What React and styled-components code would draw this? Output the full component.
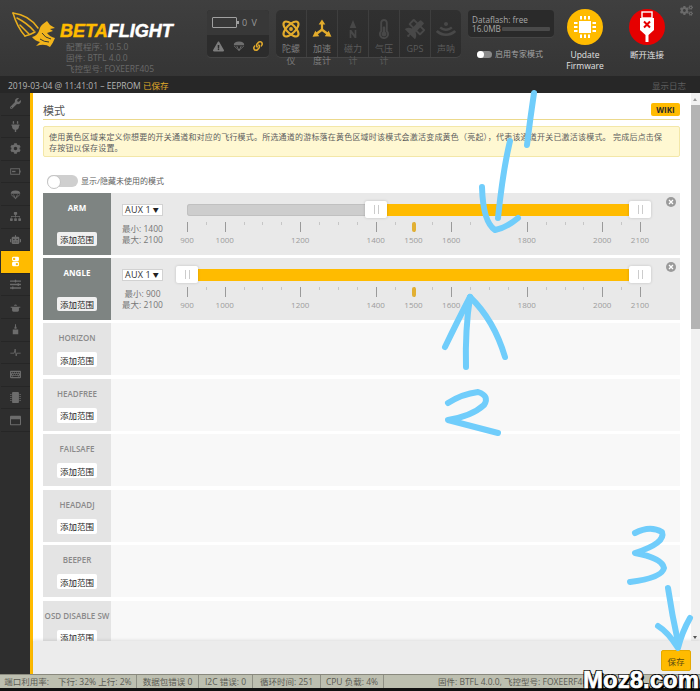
import React from "react"
import styled, { createGlobalStyle } from "styled-components"
import {
  FaWrench,
  FaPlug,
  FaCog,
  FaCogs,
  FaSitemap,
  FaRobot,
  FaSlidersH,
  FaThermometerHalf,
  FaSatellite,
  FaWifi,
  FaLink,
  FaExclamationTriangle,
  FaMicrochip,
  FaKeyboard,
  FaRegWindowMaximize,
} from "react-icons/fa"
import { LuAtom } from "react-icons/lu"

const sans = `"Open Sans", "Noto Sans CJK SC", sans-serif`
const yellow = "#ffbb00"

const GlobalStyle = createGlobalStyle`
  html, body {
    margin: 0;
    padding: 0;
    background: #111;
  }
  * {
    box-sizing: border-box;
  }
`

const Shell = styled.div`
  position: relative;
  width: 700px;
  height: 691px;
  display: flex;
  flex-direction: column;
  overflow: hidden;
  font-family: ${sans};
`

const Header = styled.header`
  position: relative;
  height: 76px;
  flex: none;
  display: flex;
  background: linear-gradient(#3f3f3f, #353535);
`

const LogoBlock = styled.div`
  width: 207px;
  flex: none;
  padding: 12px 0 0 12px;
  position: relative;
`

const LogoRow = styled.div`
  display: flex;
  align-items: flex-start;
  height: 29px;
`

const Wordmark = styled.div`
  margin: 9px 0 0 4px;
  font-family: "Liberation Sans", sans-serif;
  font-size: 18px;
  line-height: 20px;
  font-weight: 700;
  font-style: italic;
  color: #fff;
  -webkit-text-stroke: 0.5px currentColor;
  & span {
    color: ${yellow};
  }
`

const InfoLines = styled.div`
  margin-left: 54px;
  font-size: 8.5px;
  line-height: 11px;
  color: #696969;
  white-space: nowrap;
`

const BatteryPanel = styled.div`
  width: 62px;
  height: 47px;
  margin-top: 10px;
  flex: none;
  border-radius: 4px;
  overflow: hidden;
  background: #2c2c2c;
  box-shadow: 0 1px 0 #454545;
`

const BatteryTop = styled.div`
  height: 25px;
  padding-left: 5px;
  display: flex;
  align-items: center;
  gap: 5px;
  background: #383838;
  color: #999;
  font-size: 9px;
  letter-spacing: 1px;
`

const BatteryShape = styled.div`
  position: relative;
  width: 25px;
  height: 11px;
  border: 1px solid #a0a0a0;
  border-radius: 1px;
  &::after {
    content: "";
    position: absolute;
    right: -3px;
    top: 3px;
    width: 2px;
    height: 3px;
    background: #a0a0a0;
  }
`

const BatteryIcons = styled.div`
  height: 22px;
  padding: 0 6px;
  display: flex;
  align-items: center;
  justify-content: space-between;
`

const SensorPanel = styled.div`
  width: 185px;
  height: 47px;
  margin: 10px 0 0 7px;
  flex: none;
  display: flex;
  border-radius: 5px;
  background: linear-gradient(#303030, #2c2c2c);
  box-shadow: 0 1px 0 #454545;
`

const Sensor = styled.div`
  flex: 1;
  padding: 9px 3px 0;
  display: flex;
  flex-direction: column;
  align-items: center;
  border-left: ${props => (props.$first ? "0" : "1px solid #3e3e3e")};
  color: ${props => (props.$on ? "#e3ac2c" : "#484848")};
  & svg {
    flex: none;
  }
`

const SensorLabel = styled.div`
  width: 20px;
  margin-top: 4px;
  font-size: 9px;
  line-height: 12px;
  text-align: center;
  color: ${props => (props.$on ? "#7c7c7c" : "#5b5b5b")};
`

const FlashColumn = styled.div`
  width: 86px;
  margin: 10px 0 0 7px;
  flex: none;
`

const FlashPanel = styled.div`
  height: 27px;
  padding: 5px 4px 0;
  border-radius: 4px;
  background: #2a2a2a;
  box-shadow: 0 1px 0 #454545;
  font-size: 8.2px;
  line-height: 9px;
  color: #a8a8a8;
`

const FlashRow = styled.div`
  display: flex;
  align-items: center;
  gap: 1px;
`

const FlashBar = styled.div`
  flex: 1;
  height: 4px;
  border-radius: 1px;
  background: #4a4a4a;
`

const ExpertRow = styled.div`
  margin: 13px 0 0 9px;
  display: flex;
  align-items: center;
  gap: 3px;
  font-size: 8px;
  line-height: 8px;
  color: #a5a5a5;
  white-space: nowrap;
`

const MiniToggle = styled.div`
  position: relative;
  width: 15px;
  height: 7px;
  border-radius: 4px;
  background: #8a8a8a;
  &::before {
    content: "";
    position: absolute;
    left: 0;
    top: 0;
    width: 7px;
    height: 7px;
    border-radius: 50%;
    background: #fff;
  }
`

const HeaderAction = styled.div`
  width: 62px;
  flex: none;
  padding-top: 9px;
  display: flex;
  flex-direction: column;
  align-items: center;
  font-size: 8.5px;
  line-height: 10.5px;
  color: #e2e2e2;
  text-align: center;
`

const ActionDisc = styled.div`
  width: 36px;
  height: 36px;
  margin-bottom: 5px;
  border-radius: 50%;
  display: flex;
  align-items: center;
  justify-content: center;
  background: ${props => props.$color};
  color: #fff;
`

const GearButton = styled.div`
  position: absolute;
  top: 4px;
  right: 7px;
  color: #6a6a6a;
  line-height: 0;
`

const LogBar = styled.div`
  height: 17px;
  flex: none;
  padding: 0 14px 0 8px;
  display: flex;
  align-items: center;
  justify-content: space-between;
  background: #272727;
  font-size: 8.5px;
  color: #b5b5b5;
  & b {
    font-weight: 400;
    color: #e0aa2a;
  }
  & i {
    font-style: normal;
    color: #5e5e5e;
  }
`

const Main = styled.div`
  flex: 1;
  min-height: 0;
  display: flex;
`

const Sidebar = styled.nav`
  width: 33px;
  flex: none;
  padding-left: 1px;
  background: #2e2e2e;
  border-right: 3px solid ${yellow};
`

const NavItem = styled.div`
  height: 22.6px;
  display: flex;
  align-items: center;
  justify-content: center;
  border-bottom: 1px solid #262626;
  background: ${props => (props.$active ? yellow : "transparent")};
  color: ${props => (props.$active ? "#fff" : "#6c6c6c")};
`

const TabColumn = styled.div`
  flex: 1;
  min-width: 0;
  display: flex;
  flex-direction: column;
`

const TabBody = styled.div`
  flex: 1;
  min-height: 0;
  display: flex;
  background: #fff;
`

const TabScroll = styled.div`
  flex: 1;
  min-width: 0;
  overflow: hidden;
  padding: 0 11px 0 10px;
`

const TitleRow = styled.div`
  height: 27px;
  padding-top: 10px;
  display: flex;
  align-items: center;
  justify-content: space-between;
  border-bottom: 1px solid #ecd98c;
`

const Title = styled.h2`
  margin: 0;
  font-size: 11px;
  line-height: 16px;
  font-weight: 400;
  color: #555;
`

const WikiBadge = styled.div`
  width: 29px;
  height: 13px;
  margin-top: -3px;
  border-radius: 2px;
  display: flex;
  align-items: center;
  justify-content: center;
  background: ${yellow};
  font-size: 8px;
  font-weight: 700;
  color: #2a2a2a;
`

const Note = styled.div`
  height: 31px;
  margin-top: 6px;
  padding: 4px 14px 0 5px;
  border: 1px solid #f3e7a8;
  border-radius: 2px;
  background: #fff8d2;
  font-size: 8px;
  line-height: 11px;
  letter-spacing: 0.2px;
  color: #5d5d5d;
`

const ShowUnused = styled.div`
  height: 13px;
  margin: 17px 0 6px 4px;
  display: flex;
  align-items: center;
  gap: 3px;
  font-size: 8px;
  color: #5d5d5d;
`

const LargeToggle = styled.div`
  position: relative;
  width: 31px;
  height: 12px;
  border-radius: 6px;
  background: #cfcfcf;
  &::before {
    content: "";
    position: absolute;
    left: 0;
    top: 0;
    width: 12px;
    height: 12px;
    border-radius: 50%;
    background: #fff;
    border: 1px solid #c4c4c4;
  }
`

const ModeList = styled.div`
  display: flex;
  flex-direction: column;
  gap: 3.5px;
`

const ModeRow = styled.div`
  position: relative;
  flex: none;
  height: ${props => (props.$active ? "61.5px" : "52px")};
  display: flex;
  background: ${props => (props.$active ? "#e9e9e9" : "#f8f8f8")};
`

const ModeHead = styled.div`
  width: 68px;
  flex: none;
  display: flex;
  flex-direction: column;
  align-items: center;
  background: ${props => (props.$active ? "#7e8482" : "#e4e4e4")};
`

const ModeName = styled.div`
  margin-top: 9px;
  font-size: 8px;
  line-height: 11px;
  font-weight: ${props => (props.$active ? 700 : 600)};
  color: ${props => (props.$active ? "#fff" : "#8a8a8a")};
  white-space: nowrap;
`

const AddRange = styled.div`
  width: 40px;
  height: ${props => (props.$active ? "14px" : "15px")};
  margin-top: ${props => (props.$active ? "19px" : "9px")};
  border-radius: 2px;
  display: flex;
  align-items: center;
  justify-content: center;
  background: ${props => (props.$active ? "#f0f0f0" : "#fff")};
  font-size: 8.5px;
  color: #222;
`

const RangeBody = styled.div`
  flex: 1;
  padding: 11px 0 0 11px;
  display: flex;
`

const ChannelColumn = styled.div`
  width: 41px;
  flex: none;
`

const ChannelSelect = styled.div`
  height: 12px;
  padding: 0 3px 1px 2px;
  display: flex;
  align-items: center;
  justify-content: space-between;
  background: #fff;
  border: 1px solid #d2d2d2;
  font-size: 9px;
  letter-spacing: 0.2px;
  color: #333;
  & span {
    font-size: 6px;
    color: #222;
  }
`

const MinMax = styled.div`
  margin-top: 7px;
  font-size: 8.5px;
  line-height: 11px;
  color: #777;
  text-align: center;
  white-space: nowrap;
`

const SliderColumn = styled.div`
  width: 453px;
  margin-left: 24px;
  flex: none;
`

const SliderTrack = styled.div`
  position: relative;
  height: 12px;
  border-radius: 3px;
  background: #cdcdcd;
  box-shadow: inset 0 0 0 1px #c0c0c0;
`

const SliderFill = styled.div`
  position: absolute;
  top: 0;
  bottom: 0;
  background: ${yellow};
`

const Handle = styled.div`
  position: absolute;
  top: -3px;
  width: 22px;
  height: 17px;
  margin-left: -11px;
  border-radius: 2px;
  background: #fff;
  box-shadow: 0 0 3px rgba(0, 0, 0, 0.18);
  &::before {
    content: "";
    position: absolute;
    left: 9px;
    top: 4px;
    width: 3px;
    height: 9px;
    border-left: 1px solid #ccc;
    border-right: 1px solid #ccc;
  }
`

const Scale = styled.div`
  position: relative;
  height: 29px;
  margin-top: 6px;
`

const Tick = styled.div`
  position: absolute;
  top: 0;
  width: 1px;
  height: ${props => (props.$major ? "10px" : "3px")};
  background: ${props => (props.$major ? "#9a9a9a" : "#c6c6c6")};
`

const TickLabel = styled.div`
  position: absolute;
  top: 13px;
  width: 30px;
  margin-left: -15px;
  text-align: center;
  font-size: 8px;
  line-height: 10px;
  color: #9c9c9c;
`

const Marker = styled.div`
  position: absolute;
  top: 0;
  width: 4px;
  height: 10px;
  margin-left: -1.5px;
  border-radius: 2px;
  background: #e2b033;
`

const RemoveButton = styled.div`
  position: absolute;
  top: 4px;
  right: 4px;
  width: 10px;
  height: 10px;
  border-radius: 50%;
  display: flex;
  align-items: center;
  justify-content: center;
  background: #9a9a9a;
  color: #fff;
`

const ScrollBar = styled.div`
  position: relative;
  width: 9px;
  flex: none;
  padding-top: 12px;
  background: #f1f1f1;
`

const ScrollThumb = styled.div`
  height: 224px;
  background: #b4b4b4;
`

const ScrollArrow = styled.div`
  position: absolute;
  left: 2px;
  width: 0;
  height: 0;
  border-left: 2.5px solid transparent;
  border-right: 2.5px solid transparent;
  ${props =>
    props.$down
      ? "bottom: 2px; border-top: 3px solid #555;"
      : "top: 5px; border-bottom: 3px solid #999;"}
`

const Toolbar = styled.div`
  position: relative;
  height: 33px;
  flex: none;
  padding: 9px 9px 0 0;
  display: flex;
  justify-content: flex-end;
  align-items: flex-start;
  background: #ececec;
  box-shadow: 0 -1px 3px rgba(0, 0, 0, 0.1);
`

const SaveButton = styled.div`
  width: 30px;
  height: 21px;
  border-radius: 2px;
  display: flex;
  align-items: center;
  justify-content: center;
  background: ${yellow};
  border: 1px solid #e5a900;
  font-size: 8.5px;
  color: #5a4a10;
`

const Footer = styled.footer`
  height: 17px;
  flex: none;
  border-bottom: 3px solid #111;
  border-top: 1px solid #8c8c80;
  display: flex;
  background: #bdbfb0;
  font-size: 8.5px;
  line-height: 13px;
  color: #5a5a52;
  white-space: nowrap;
`

const FooterItem = styled.div`
  width: ${props => props.$width}px;
  flex: none;
  text-align: center;
  border-right: 1px solid #8f9085;
`

const FirmwareInfo = styled.div`
  margin-left: 54px;
`

const Overlay = styled.svg`
  position: absolute;
  left: 0;
  top: 0;
  pointer-events: none;
`

const Watermark = styled.div`
  position: absolute;
  left: 583px;
  bottom: 0;
  font-family: "Liberation Sans", sans-serif;
  font-size: 24px;
  line-height: 22px;
  font-weight: 700;
  color: #fff;
  white-space: nowrap;
  -webkit-text-stroke: 0.6px #fff;
  text-shadow: 1px 1px 0 #000, -1px 1px 0 #000, 2px 2px 0 #000, 1px -1px 0 #000, -1px -1px 0 #000;
`

const Bird = () => (
  <svg width="44" height="36" viewBox="12 12 44 36">
    <g fill="none" stroke="#e9ae1d" strokeWidth="1.5" strokeLinecap="round">
      <path d="M13 13 Q29 15 38 28" />
      <path d="M13 13 Q17 27 25 36" />
      <path d="M25 36 Q30 35 35 32" />
      <path d="M17 18 Q27 23 34 31" />
      <path d="M20 25 Q25 30 29 34" />
    </g>
    <path
      d="M43 24 L47 21 L50 25 L55 28 L50 29 L53 31 L47 33 Q50 37 55 38 Q53 43 50 47 Q46 44 40 45 L36 46 L40 42 Q35 41 32 37 Q37 36 39 31 Q40 26 43 24Z"
      fill="#f2b41b"
    />
    <path d="M42 33 Q45 38 51 39 M40 39 Q44 42 49 42" stroke="#38382f" strokeWidth="1" fill="none" />
  </svg>
)

const Parachute = ({ size, color }) => (
  <svg width={size} height={size} viewBox="0 0 16 16">
    <path d="M1 7 Q1 2 8 2 Q15 2 15 7 L11 7 L8 7 L5 7Z" fill={color} />
    <path d="M1.5 8 L8 14 L14.5 8 M5 8 L8 14 L11 8" stroke={color} strokeWidth="1.2" fill="none" />
  </svg>
)

const BatteryGlyph = ({ size }) => (
  <svg width={size} height={size} viewBox="0 0 16 16">
    <rect x="1" y="4" width="13" height="8" fill="none" stroke="currentColor" strokeWidth="1.3" />
    <rect x="3" y="7" width="5" height="2" fill="currentColor" />
    <rect x="14" y="6.5" width="1.5" height="3" fill="currentColor" />
  </svg>
)

const SwitchGlyph = ({ size }) => (
  <svg width={size} height={size} viewBox="0 0 16 16">
    <rect x="3" y="1" width="10" height="6.5" rx="2" fill="currentColor" />
    <rect x="3" y="8.5" width="10" height="6.5" rx="2" fill="currentColor" />
    <circle cx="6" cy="4.2" r="1.7" fill="#ffbb00" />
    <circle cx="10" cy="11.8" r="1.7" fill="#ffbb00" />
  </svg>
)

const PotGlyph = ({ size }) => (
  <svg width={size} height={size} viewBox="0 0 16 16">
    <path d="M3 7 H13 V12 Q13 14 11 14 H5 Q3 14 3 12Z M1 7 H15 V8.5 H1Z M5.5 5.5 Q8 2 10.5 5.5 Z" fill="currentColor" />
  </svg>
)

const MotorGlyph = ({ size }) => (
  <svg width={size} height={size} viewBox="0 0 16 16">
    <path d="M4 8 H12 V15 H4Z M6.5 4 H9.5 V7 H6.5Z M7.3 0.5 H8.7 V4 H7.3Z" fill="currentColor" />
  </svg>
)

const PulseGlyph = ({ size }) => (
  <svg width={size} height={size} viewBox="0 0 16 16">
    <path d="M0.5 9 H6 L7.5 3 L9 13 L10 9 H15.5" stroke="currentColor" strokeWidth="1.2" fill="none" />
  </svg>
)

const ParachuteNav = ({ size }) => <Parachute size={size} color="currentColor" />

const AccelGlyph = () => (
  <svg width="20" height="20" viewBox="0 0 18 18" fill="currentColor">
    <path d="M9 0.5 L12 5 L10 5 L10 9 L14 12 L15 10.5 L17.5 16 L11.5 15.5 L12.7 13.8 L9 11 L5.3 13.8 L6.5 15.5 L0.5 16 L3 10.5 L4 12 L8 9 L8 5 L6 5Z" />
  </svg>
)

const MagGlyph = () => (
  <svg width="20" height="20" viewBox="0 0 18 18" fill="currentColor">
    <path d="M9 1 L12 8 H6Z M6 10 H7.5 L10.5 14 V10 H12 V17 H10.5 L7.5 13 V17 H6Z" />
  </svg>
)

const UsbGlyph = () => (
  <svg width="22" height="32" viewBox="0 0 22 32">
    <rect x="6" y="1" width="10" height="6" fill="none" stroke="#fff" strokeWidth="1.4" />
    <path d="M4 7 H18 V19 L12.5 24 V31 H9.5 V24 L4 19Z" fill="#fff" />
    <path d="M8 10.5 L14 16.5 M14 10.5 L8 16.5" stroke="#e60000" strokeWidth="2" />
  </svg>
)

const ChipGlyph = () => (
  <svg width="24" height="24" viewBox="0 0 24 24" fill="#fff">
    <rect x="6" y="6" width="12" height="12" />
    <path d="M1 7 H4.5 V9 H1Z M1 11 H4.5 V13 H1Z M1 15 H4.5 V17 H1Z M19.5 7 H23 V9 H19.5Z M19.5 11 H23 V13 H19.5Z M19.5 15 H23 V17 H19.5Z M7 1 H9 V4.5 H7Z M11 1 H13 V4.5 H11Z M15 1 H17 V4.5 H15Z M7 19.5 H9 V23 H7Z M11 19.5 H13 V23 H11Z M15 19.5 H17 V23 H15Z" />
  </svg>
)

const navIcons = [
  FaWrench,
  FaPlug,
  FaCog,
  BatteryGlyph,
  ParachuteNav,
  FaSitemap,
  FaRobot,
  SwitchGlyph,
  FaSlidersH,
  PotGlyph,
  MotorGlyph,
  PulseGlyph,
  FaKeyboard,
  FaMicrochip,
  FaRegWindowMaximize,
]

const sensors = [
  { icon: <LuAtom size={20} strokeWidth={2.6} />, label: "陀螺仪", on: true },
  { icon: <AccelGlyph />, label: "加速度计", on: true },
  { icon: <MagGlyph />, label: "磁力计" },
  { icon: <FaThermometerHalf size={20} />, label: "气压计" },
  { icon: <FaSatellite size={20} />, label: "GPS" },
  { icon: <FaWifi size={20} style={{ transform: "rotate(180deg)" }} />, label: "声呐" },
]

const modes = [
  { name: "ARM", min: 1400, max: 2100 },
  { name: "ANGLE", min: 900, max: 2100 },
  { name: "HORIZON" },
  { name: "HEADFREE" },
  { name: "FAILSAFE" },
  { name: "HEADADJ" },
  { name: "BEEPER" },
  { name: "OSD DISABLE SW" },
]

const majorTicks = [900, 1000, 1200, 1400, 1500, 1600, 1800, 2000, 2100]
const allTicks = Array.from({ length: 25 }, (_, i) => 900 + i * 50)
const pct = value => `${((value - 900) / 1200) * 100}%`

const RangeSlider = ({ min, max }) => (
  <SliderColumn>
    <SliderTrack>
      <SliderFill style={{ left: pct(min), width: `${((max - min) / 1200) * 100}%` }} />
      <Handle style={{ left: pct(min) }} />
      <Handle style={{ left: pct(max) }} />
    </SliderTrack>
    <Scale>
      {allTicks.map(value => (
        <Tick key={value} $major={majorTicks.includes(value)} style={{ left: pct(value) }} />
      ))}
      {majorTicks.map(value => (
        <TickLabel key={value} style={{ left: pct(value) }}>
          {value}
        </TickLabel>
      ))}
      <Marker style={{ left: pct(1500) }} />
    </Scale>
  </SliderColumn>
)

const Mode = ({ mode }) => {
  const active = mode.min !== undefined
  return (
    <ModeRow $active={active}>
      <ModeHead $active={active}>
        <ModeName $active={active}>{mode.name}</ModeName>
        <AddRange $active={active}>添加范围</AddRange>
      </ModeHead>
      {active && (
        <RangeBody>
          <ChannelColumn>
            <ChannelSelect>
              AUX 1<span>▼</span>
            </ChannelSelect>
            <MinMax>
              最小: {mode.min}
              <br />
              最大: {mode.max}
            </MinMax>
          </ChannelColumn>
          <RangeSlider min={mode.min} max={mode.max} />
          <RemoveButton>
            <svg width="6" height="6" viewBox="0 0 6 6">
              <path d="M1 1 L5 5 M5 1 L1 5" stroke="currentColor" strokeWidth="1.3" />
            </svg>
          </RemoveButton>
        </RangeBody>
      )}
    </ModeRow>
  )
}

const strokes = [
  "M534 93 Q530 120 527 145",
  "M510 141 Q503 170 498 218",
  "M482 187 Q483 222 495 230 Q506 228 518 218",
  "M470 297 Q465 330 466 367",
  "M470 297 Q458 320 445 347",
  "M470 297 Q494 320 505 357",
  "M448 403 Q462 394 478 392 Q490 396 484 405 Q472 416 448 420 L498 433",
  "M635 533 Q650 525 662 532 Q666 543 635 553 Q662 558 664 568 Q662 578 630 582",
  "M668 588 Q672 615 678 642",
  "M658 626 Q668 632 678 648 Q682 632 690 618",
]

const App = () => (
  <>
    <GlobalStyle />
    <Shell>
      <Header>
        <LogoBlock>
          <LogoRow>
            <Bird />
            <Wordmark>
              <span>BETA</span>FLIGHT
            </Wordmark>
          </LogoRow>
          <InfoLines>
            配置程序: 10.5.0
            <br />
            固件: BTFL 4.0.0
            <br />
            飞控型号: FOXEERF405
          </InfoLines>
        </LogoBlock>
        <BatteryPanel>
          <BatteryTop>
            <BatteryShape />0 V
          </BatteryTop>
          <BatteryIcons>
            <FaExclamationTriangle size={11} color="#7c7c7c" />
            <Parachute size={12} color="#6e6e6e" />
            <FaLink size={10} color="#e2aa2c" />
          </BatteryIcons>
        </BatteryPanel>
        <SensorPanel>
          {sensors.map((sensor, i) => (
            <Sensor key={sensor.label} $first={i === 0} $on={sensor.on}>
              {sensor.icon}
              <SensorLabel $on={sensor.on}>{sensor.label}</SensorLabel>
            </Sensor>
          ))}
        </SensorPanel>
        <FlashColumn>
          <FlashPanel>
            Dataflash: free
            <FlashRow>
              16.0MB
              <FlashBar />
            </FlashRow>
          </FlashPanel>
          <ExpertRow>
            <MiniToggle />
            启用专家模式
          </ExpertRow>
        </FlashColumn>
        <HeaderAction>
          <ActionDisc $color={yellow}>
            <ChipGlyph />
          </ActionDisc>
          Update
          <br />
          Firmware
        </HeaderAction>
        <HeaderAction>
          <ActionDisc $color="#e60000">
            <UsbGlyph />
          </ActionDisc>
          断开连接
        </HeaderAction>
        <GearButton>
          <FaCogs size={13} />
        </GearButton>
      </Header>
      <LogBar>
        <span>
          2019-03-04 @ 11:41:01 – EEPROM <b>已保存</b>
        </span>
        <i>显示日志</i>
      </LogBar>
      <Main>
        <Sidebar>
          {navIcons.map((Icon, i) => (
            <NavItem key={i} $active={i === 7}>
              <Icon size={11} />
            </NavItem>
          ))}
        </Sidebar>
        <TabColumn>
          <TabBody>
            <TabScroll>
              <TitleRow>
                <Title>模式</Title>
                <WikiBadge>WIKI</WikiBadge>
              </TitleRow>
              <Note>
                使用黄色区域来定义你想要的开关通道和对应的飞行模式。所选通道的游标落在黄色区域时该模式会激活变成黄色（亮起），代表该通道开关已激活该模式。
                完成后点击保存按钮以保存设置。
              </Note>
              <ShowUnused>
                <LargeToggle />
                显示/隐藏未使用的模式
              </ShowUnused>
              <ModeList>
                {modes.map(mode => (
                  <Mode key={mode.name} mode={mode} />
                ))}
              </ModeList>
            </TabScroll>
            <ScrollBar>
              <ScrollArrow />
              <ScrollThumb />
              <ScrollArrow $down />
            </ScrollBar>
          </TabBody>
          <Toolbar>
            <SaveButton>保存</SaveButton>
          </Toolbar>
        </TabColumn>
      </Main>
      <Footer>
        <FooterItem $width={137}>端口利用率:&nbsp;&nbsp;&nbsp;&nbsp;下行: 32% 上行: 2%</FooterItem>
        <FooterItem $width={62}>数据包错误 0</FooterItem>
        <FooterItem $width={54}>I2C 错误: 0</FooterItem>
        <FooterItem $width={68}>循环时间: 251</FooterItem>
        <FooterItem $width={63}>CPU 负载: 4%</FooterItem>
        <FirmwareInfo>固件: BTFL 4.0.0, 飞控型号: FOXEERF405</FirmwareInfo>
      </Footer>
      <Overlay width="700" height="691" viewBox="0 0 700 691">
        {strokes.map(d => (
          <path key={d} d={d} fill="none" stroke="#70cdfb" strokeWidth="6" strokeLinecap="round" strokeLinejoin="round" />
        ))}
      </Overlay>
      <Watermark>Moz8.com</Watermark>
    </Shell>
  </>
)

export default App
